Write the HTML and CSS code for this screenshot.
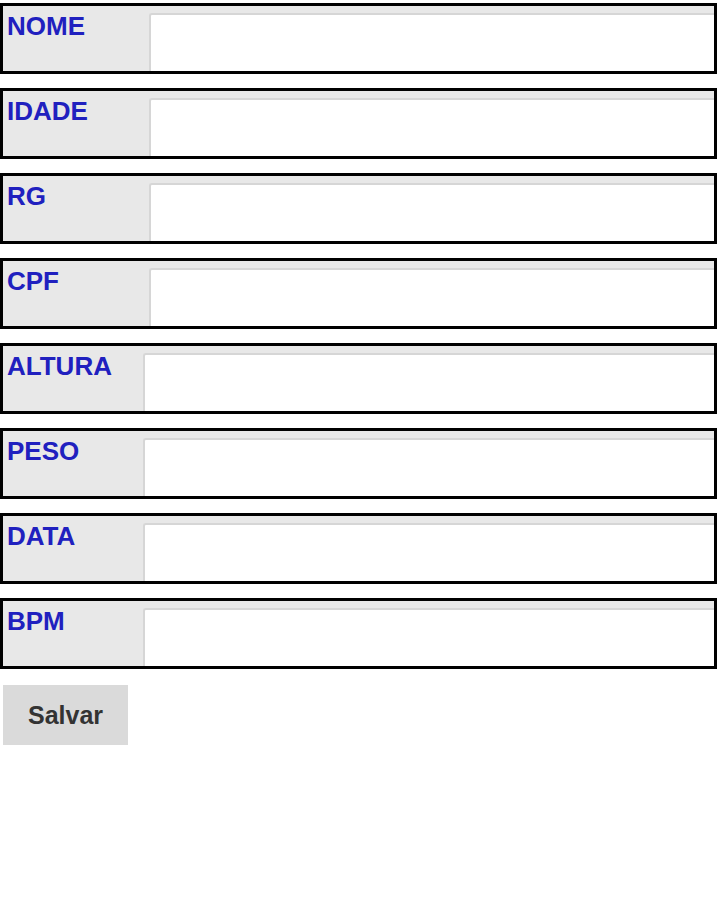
FILE: index.html
```html
<!DOCTYPE html>
<html lang="pt-BR">

<head>
    <meta charset="UTF-8" />
    <title>Cadastro</title>

    <link rel="stylesheet" href="styles.css">
</head>

<body>
    <form id="cadastro">
        <div class="campo">
            <label for="nome">NOME</label>
            <input id="nome" type="text" />
        </div>
        <div class="campo">
            <label for="idade">IDADE</label>
            <input id="idade" type="text" />
        </div>
        <div class="campo">
            <label for="rg">RG</label>
            <input id="rg" type="text" />
        </div>
        <div class="campo">
            <label for="cpf">CPF</label>
            <input id="cpf" type="text" />
        </div>
        <div class="campo estreito">
            <label for="altura">ALTURA</label>
            <input id="altura" type="text" />
        </div>
        <div class="campo estreito">
            <label for="peso">PESO</label>
            <input id="peso" type="text" />
        </div>
        <div class="campo estreito">
            <label for="data">DATA</label>
            <input id="data" type="text" />
        </div>
        <div class="campo estreito">
            <label for="bpm">BPM</label>
            <input id="bpm" type="text" />
        </div>

        <button id="salvarBtn" type="button">Salvar</button>
    </form>
</body>

</html>
```

FILE: styles.css
```css
body {
    margin: 0;
    padding: 0;
    background: #fff;
    font-family: "Liberation Sans", Arial, sans-serif;
}

#cadastro {
    display: flex;
    flex-direction: column;
    gap: 14px;
    padding-top: 3px;
}

.campo {
    display: flex;
    height: 65px;
    border: 3px solid #000;
    background: #e8e8e8;
}

.campo label {
    width: 142px;
    padding: 5px 0 0 4px;
    font-size: 26px;
    font-weight: bold;
    color: #2020bf;
}

.campo.estreito label {
    width: 136px;
}

.campo input {
    flex: 1;
    margin-top: 7px;
    padding: 0 8px;
    border: none;
    border-top: 2px solid #d6d6d6;
    border-left: 2px solid #d6d6d6;
    border-radius: 3px 0 0 0;
    background: #fff;
    font-size: 20px;
    outline: none;
}

#salvarBtn {
    align-self: flex-start;
    margin: 2px 0 0 3px;
    width: 125px;
    height: 60px;
    border: none;
    background: #dadada;
    color: #333;
    font-family: "Liberation Sans", Arial, sans-serif;
    font-size: 25px;
    font-weight: bold;
    cursor: pointer;
}
```
